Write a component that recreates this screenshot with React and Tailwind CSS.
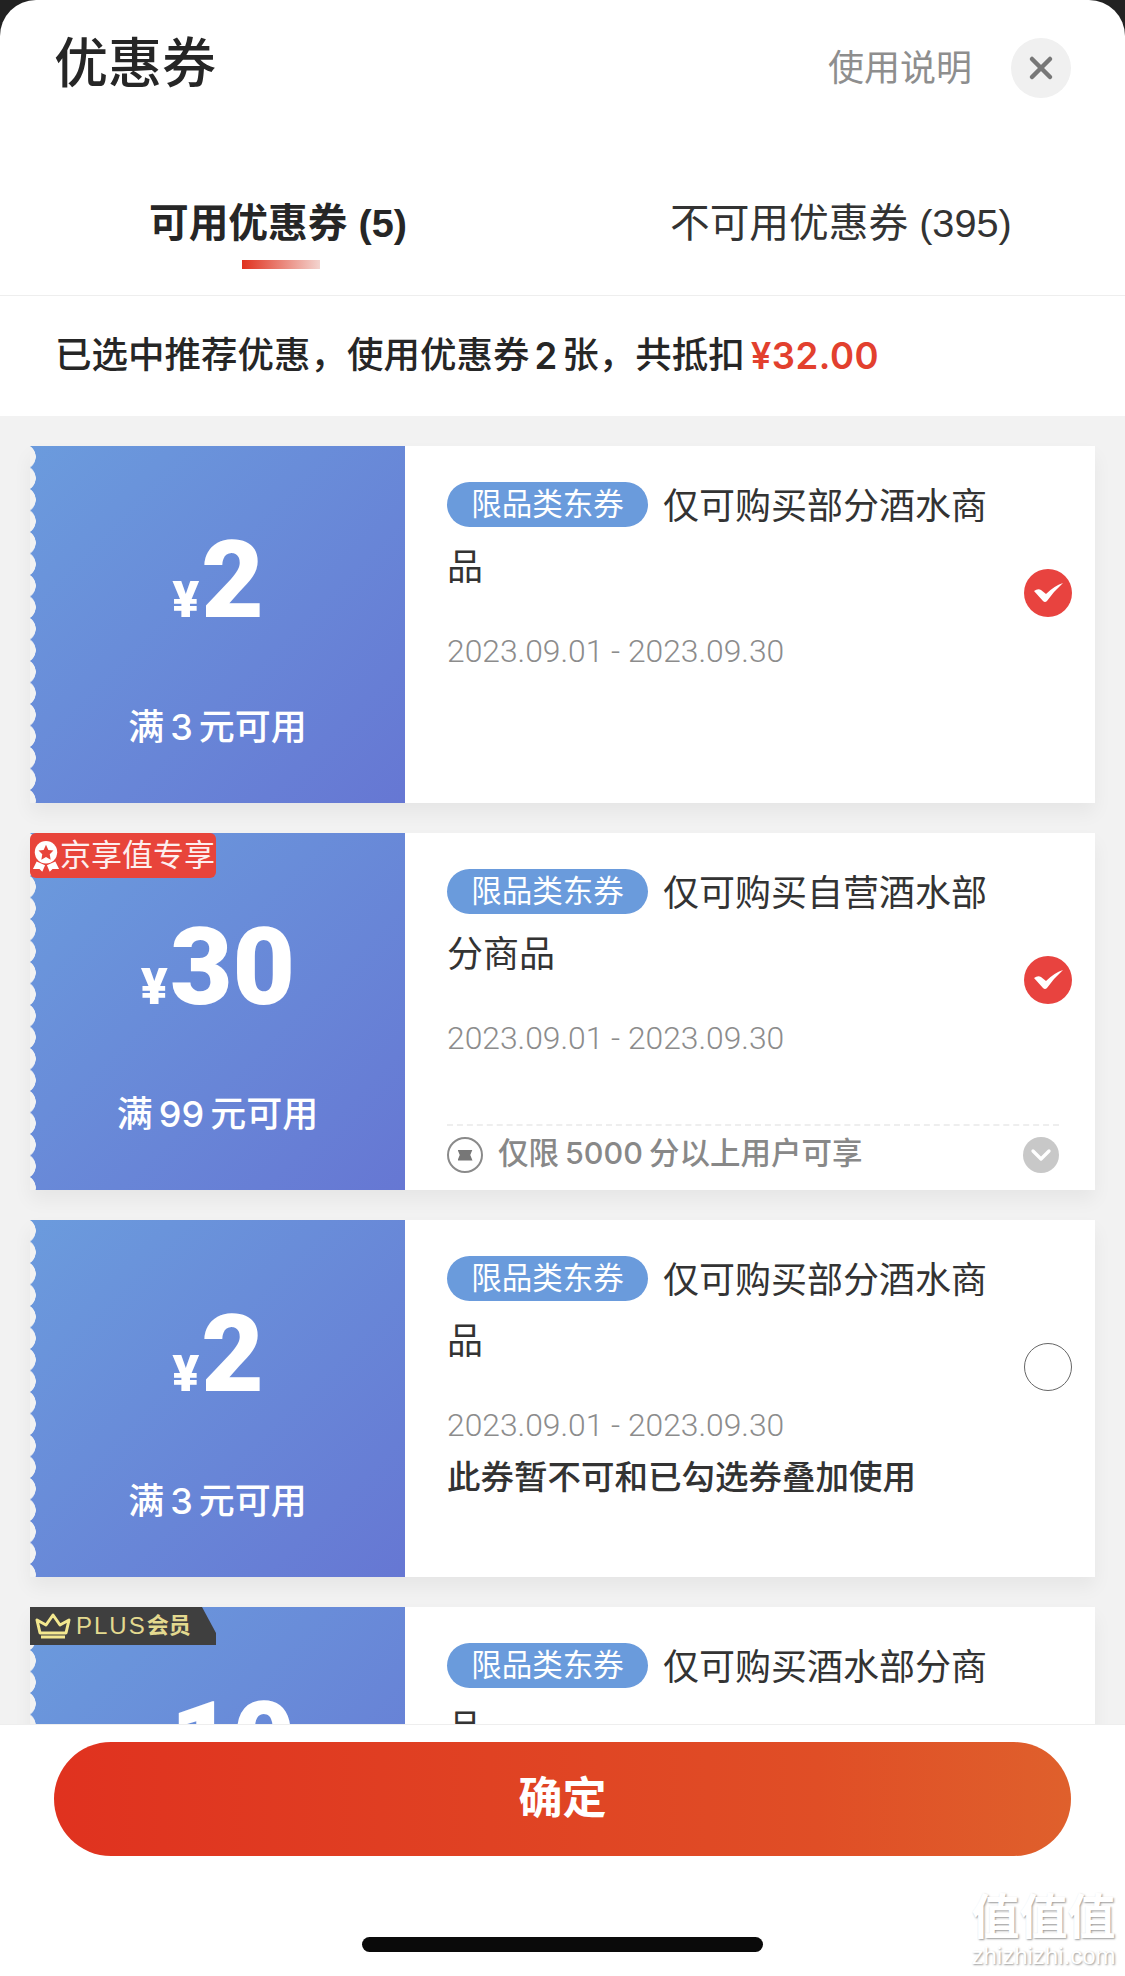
import { X, ChevronDown } from 'lucide-react'

const cjk = "font-['Liberation_Sans','Noto_Sans_CJK_SC',sans-serif]"

const coupons = [
  { price: '2', cond: <>满<span className="mx-[6px] font-['Inter']">3</span>元可用</>, desc: '仅可购买部分酒水商品', checked: true },
  { price: '30', cond: <>满<span className="mx-[6px] font-['Inter']">99</span>元可用</>, desc: '仅可购买自营酒水部分商品', checked: true, badge: 'jx', footer: true },
  { price: '2', cond: <>满<span className="mx-[6px] font-['Inter']">3</span>元可用</>, desc: '仅可购买部分酒水商品', checked: false, note: '此券暂不可和已勾选券叠加使用' },
  { price: '10', cond: <>满<span className="mx-[6px] font-['Inter']">99</span>元可用</>, desc: '仅可购买酒水部分商品', checked: false, badge: 'plus' },
]

function JxBadge() {
  return (
    <div className="absolute left-0 top-0 z-10 flex h-[45px] w-[186px] items-center whitespace-nowrap rounded-[6px] bg-[#e8443a] pl-[2px] text-[31px] leading-none text-[#fdeeee]">
      <svg width="28" height="34" viewBox="0 0 30 36" className="shrink-0">
        <path d="M5 24 L1 32 L8 32 L11 35 L14 28 Z M25 24 L29 32 L22 32 L19 35 L16 28 Z" fill="#fff" />
        <circle cx="15" cy="14" r="12" fill="#fff" />
        <path d="M15 6 L17.5 11.5 L23 12 L19 16 L20 22 L15 19 L10 22 L11 16 L7 12 L12.5 11.5 Z" fill="#e8443a" />
      </svg>
      京享值专享
    </div>
  )
}

function PlusBadge() {
  return (
    <div className="absolute left-0 top-0 z-10 flex h-[38px] w-[186px] items-center whitespace-nowrap bg-[#3f3f3f] pl-[4px] text-[#e3d98f] [clip-path:polygon(0_0,172px_0,186px_26px,186px_38px,0_38px)]">
      <svg width="38" height="28" viewBox="0 0 38 28" className="mr-[4px] shrink-0">
        <path d="M7 25 H31 M6 21 L3 8 L12 13 L19 3 L26 13 L35 8 L32 21 Z" fill="none" stroke="#f3e88f" strokeWidth="3" strokeLinejoin="round" />
      </svg>
      <span className="text-[24px] leading-none tracking-[2px]">PLUS</span>
      <span className="text-[22px] font-bold leading-none">会员</span>
    </div>
  )
}

function CheckMark() {
  return (
    <svg width="48" height="48" viewBox="0 0 48 48" className="absolute left-[619px] top-[123px]">
      <circle cx="24" cy="24" r="24" fill="#e8433f" />
      <path d="M10 22 Q14 19 17 21 L22 25 Q30 17 39 14 Q30 22 23 32 Q21 34 19 32 Z" fill="#fff" />
    </svg>
  )
}

function CouponCard({ coupon }) {
  return (
    <div className="relative flex h-[357px] w-full shrink-0 bg-white shadow-[0_10px_18px_rgba(0,0,0,0.05)]">
      {coupon.badge === 'jx' && <JxBadge />}
      {coupon.badge === 'plus' && <PlusBadge />}

      {/* left price panel */}
      <div className="relative flex w-[375px] shrink-0 flex-col items-center bg-[linear-gradient(135deg,#6b9bdd,#6677d3)] text-white">
        <div className="absolute inset-y-0 left-0 w-[6px] bg-[radial-gradient(circle_at_-7px_50%,#f2f2f2_12.5px,transparent_13px)] bg-[length:6px_21.5px]" />
        <div className="mt-[80px] flex h-[116px] items-baseline pl-[1px] font-['Roboto',sans-serif]">
          <span className="mr-[2px] text-[50px] font-black leading-none">¥</span>
          <span className="text-[108px] font-black leading-none">{coupon.price}</span>
        </div>
        <div className={`mt-[67px] text-[36px] font-medium leading-none ${cjk}`}>{coupon.cond}</div>
      </div>

      {/* right details */}
      <div className="relative flex flex-1 flex-col pl-[42px] pt-[30px]">
        <div className="w-[556px] text-[36px] leading-[61px] text-[#333]">
          <span className="mr-[15px] inline-flex h-[45px] w-[201px] items-center justify-center rounded-full bg-[#6a9bdc] align-[4px] text-[30.5px] leading-none text-white">
            限品类东券
          </span>
          {coupon.desc}
        </div>
        <div className="mt-[33px] font-['Roboto',sans-serif] text-[31.8px] font-light leading-[40px] text-[#8c8c8c]">
          2023.09.01 - 2023.09.30
        </div>
        {coupon.note && (
          <div className="mt-[13px] text-[33.5px] font-medium leading-[40px] text-[#333]">{coupon.note}</div>
        )}

        {coupon.checked ? (
          <CheckMark />
        ) : (
          <div className="absolute left-[619px] top-[123px] h-[48px] w-[48px] rounded-full border border-[#666]" />
        )}

        {coupon.footer && (
          <div className="absolute bottom-0 left-[42px] right-[36px] flex h-[66px] items-center border-t-2 border-dashed border-[#eeeeee] pb-[6px]">
            <div className="flex h-[36px] w-[36px] items-center justify-center rounded-full border-2 border-[#8a8a8a]">
              <div className="h-[11px] w-[15px] bg-[#777] [clip-path:polygon(0_0,100%_0,85%_50%,100%_100%,0_100%,15%_50%)]" />
            </div>
            <div className="ml-[15px] flex-1 pb-[4px] text-[30.5px] font-medium leading-none text-[#888]">
              仅限<span className="mx-[6px] font-['Inter']">5000</span>分以上用户可享
            </div>
            <div className="flex h-[36px] w-[36px] items-center justify-center rounded-full bg-[#c8c8c8]">
              <ChevronDown size={32} strokeWidth={2.5} className="text-white" />
            </div>
          </div>
        )}
      </div>
    </div>
  )
}

export default function App() {
  return (
    <div className={`relative h-[1976px] w-[1125px] overflow-hidden bg-[#222] ${cjk}`}>
      <div className="flex h-full flex-col overflow-hidden rounded-t-[36px] bg-white">
        {/* Header */}
        <div className="flex h-[126px] shrink-0 items-start justify-between pl-[54px] pr-[54px]">
          <h1 className="mt-[31px] text-[54px] font-medium leading-[66px] text-[#262626]">优惠券</h1>
          <div className="mt-[37px] flex items-center">
            <span className="pt-[2px] text-[36px] leading-[60px] text-[#8e8e8e]">使用说明</span>
            <button className="ml-[39px] flex h-[60px] w-[60px] items-center justify-center rounded-full bg-[#f0f0f0]">
              <X size={36} strokeWidth={3} className="text-[#777]" />
            </button>
          </div>
        </div>

        {/* Tabs */}
        <div className="flex h-[170px] shrink-0 items-start border-b border-[#eeeeee] pl-[149px]">
          <div className="mt-[71px] flex w-[521px] flex-col">
            <span className="text-[39.7px] font-bold leading-[52px] text-[#262626]">可用优惠券 (5)</span>
            <div className="ml-[93px] mt-[11px] h-[9px] w-[78px] bg-[linear-gradient(90deg,#e0321f,#f3d4cf)]" />
          </div>
          <span className="mt-[71px] text-[39.7px] leading-[52px] text-[#333]">不可用优惠券 (395)</span>
        </div>

        {/* Summary */}
        <div className="flex h-[120px] shrink-0 items-center whitespace-nowrap pl-[55px] text-[36.5px] font-medium leading-none text-[#262626]">
          已选中推荐优惠，使用优惠券<span className="mx-[5px] font-['Inter'] font-semibold">2</span>张，共抵扣
          <span className="ml-[6px] font-['Inter'] font-semibold tracking-[0.5px] text-[#e2402e]">¥32.00</span>
        </div>

        {/* Coupon list */}
        <div className="flex min-h-0 flex-1 flex-col gap-[30px] overflow-hidden bg-[#f2f2f2] px-[30px] pt-[30px]">
          {coupons.map((coupon, i) => (
            <CouponCard key={i} coupon={coupon} />
          ))}
        </div>

        {/* Footer */}
        <div className="flex h-[252px] shrink-0 flex-col items-center border-t border-[#eeeeee] bg-white pt-[17px]">
          <button className="flex h-[114px] w-[1017px] items-center justify-center rounded-full bg-[linear-gradient(90deg,#e0321f,#e04e26_75%,#df602c)] text-[44px] font-bold text-white">
            确定
          </button>
          <div className="mt-[81px] h-[15px] w-[401px] rounded-full bg-[#0a0a0a]" />
        </div>
      </div>

      {/* Watermark */}
      <div className="absolute left-[971px] top-[1892px] flex w-[145px] flex-col items-center text-white [text-shadow:1px_1px_2px_#999]">
        <span className="text-[48px] font-bold leading-[52px]">值值值</span>
        <span className="text-[24px] leading-[24px]">zhizhizhi.com</span>
      </div>
    </div>
  )
}
